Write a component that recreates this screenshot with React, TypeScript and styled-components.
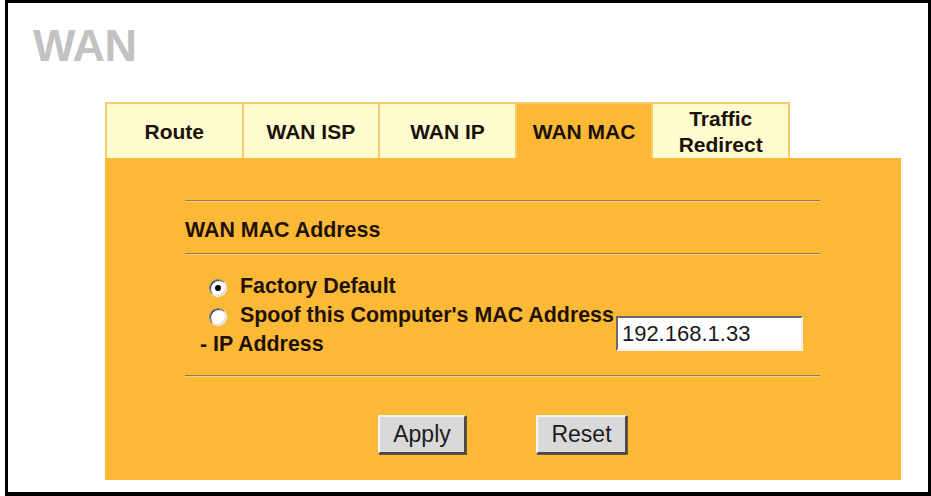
import React, { useState } from 'react';
import styled, { createGlobalStyle } from 'styled-components';

const GlobalStyle = createGlobalStyle`
    html, body {
        margin: 0;
        padding: 0;
        background: #ffffff;
    }
    body {
        font-family: "Liberation Sans", Arial, sans-serif;
    }
`
const Frame = styled.div`
    box-sizing: border-box;
    margin-left: 5px;
    width: 926px;
    height: 496px;
    border: 3px solid #000000;
    border-bottom-width: 4px;
    background: #ffffff;
    padding: 17px 0 0 97px;
`
const PageTitle = styled.div`
    margin-left: -72px;
    font-size: 45px;
    line-height: 52px;
    font-weight: 700;
    color: #c2c2c2;
    letter-spacing: -0.5px;
`
const TabRow = styled.div`
    display: flex;
    margin-top: 30px;
    width: 685px;
    height: 56px;
    box-sizing: border-box;
    border-top: 2px solid #f4cc6c;
    border-left: 2px solid #f4cc6c;
`
const Tab = styled.div<{ $active?: boolean }>`
    box-sizing: border-box;
    width: 137px;
    height: 100%;
    display: flex;
    align-items: center;
    justify-content: center;
    text-align: center;
    border-right: 2px solid #f4cc6c;
    background: ${({ $active }) => ($active ? '#fcb935' : '#fffcd0')};
    color: #1a1208;
    font-size: 21px;
    font-weight: 700;
    line-height: 26px;
    padding-top: 2px;
    cursor: pointer;
`
const Panel = styled.div`
    box-sizing: border-box;
    width: 796px;
    height: 322px;
    background: #fcb935;
    padding: 42px 81px 0 80px;
    color: #1e1208;
`
const Rule = styled.div`
    height: 0;
    border-top: 1px solid #8f7c5a;
    border-bottom: 1px solid #f1cf86;
`
const Heading = styled.div`
    font-size: 21.4px;
    font-weight: 700;
    line-height: 24px;
    margin: 16px 0 11px;
`
const Options = styled.div`
    padding: 17px 0 16px 15px;
`
const OptionLine = styled.label<{ $indent?: boolean }>`
    display: flex;
    align-items: center;
    height: 29px;
    font-size: 21.4px;
    font-weight: 700;
    white-space: nowrap;
    padding-left: ${({ $indent }) => ($indent ? '9px' : '0')};
    cursor: pointer;
`
const SpoofRow = styled.div`
    display: flex;
    align-items: center;
`
const LabelColumn = styled.div`
    display: flex;
    flex-direction: column;
`
const Radio = styled.span<{ $checked?: boolean }>`
    position: relative;
    box-sizing: border-box;
    width: 18px;
    height: 18px;
    margin-right: 13px;
    margin-top: 3px;
    border-radius: 50%;
    background: #ffffff;
    border: 1px solid;
    border-color: #7e7e7e #f2f2f2 #f2f2f2 #7e7e7e;
    box-shadow: inset 1px 1px 0 #3a3a3a, inset -1px -1px 0 #d8d4cc;
    flex: none;
    &::after {
        content: '';
        display: ${({ $checked }) => ($checked ? 'block' : 'none')};
        position: absolute;
        left: 50%;
        top: 50%;
        width: 6px;
        height: 6px;
        margin: -3px 0 0 -3px;
        border-radius: 50%;
        background: #000000;
    }
`
const AddressInput = styled.input`
    box-sizing: border-box;
    width: 187px;
    height: 35px;
    margin: 6px 0 0 2px;
    padding: 2px 4px 0;
    font-family: "Liberation Sans", Arial, sans-serif;
    font-size: 22px;
    color: #1a1a1a;
    background: #ffffff;
    border: 2px solid;
    border-color: #6a6a6a #f4f4f4 #f4f4f4 #6a6a6a;
    outline: none;
`
const ButtonRow = styled.div`
    display: flex;
    justify-content: center;
    gap: 70px;
    margin-top: 38px;
`
const ClassicButton = styled.button<{ $width: number }>`
    box-sizing: border-box;
    width: ${({ $width }) => $width}px;
    height: 39px;
    font-family: "Liberation Sans", Arial, sans-serif;
    font-size: 23px;
    color: #1c1c1c;
    background: #d9d9d9;
    border: 2px solid;
    border-color: #f4f4f4 #4a4a4a #4a4a4a #f4f4f4;
    box-shadow: 1px 1px 0 #6a5a3a;
    padding: 0;
    cursor: pointer;
`

const tabs = ['Route', 'WAN ISP', 'WAN IP', 'WAN MAC', 'Traffic\nRedirect'];

export default function App() {
    const [mode, setMode] = useState<'factory' | 'spoof'>('factory');
    const [ip, setIp] = useState('192.168.1.33');

    return (
        <>
            <GlobalStyle />
            <Frame>
                <PageTitle>WAN</PageTitle>
                <TabRow>
                    {tabs.map((t) => (
                        <Tab key={t} $active={t === 'WAN MAC'}>
                            <span style={{ whiteSpace: 'pre-line' }}>{t}</span>
                        </Tab>
                    ))}
                </TabRow>
                <Panel>
                    <Rule />
                    <Heading>WAN MAC Address</Heading>
                    <Rule />
                    <Options>
                        <OptionLine $indent onClick={() => setMode('factory')}>
                            <Radio $checked={mode === 'factory'} />
                            Factory Default
                        </OptionLine>
                        <SpoofRow>
                            <LabelColumn>
                                <OptionLine $indent onClick={() => setMode('spoof')}>
                                    <Radio $checked={mode === 'spoof'} />
                                    Spoof this Computer's MAC Address
                                </OptionLine>
                                <OptionLine>- IP Address</OptionLine>
                            </LabelColumn>
                            <AddressInput value={ip} onChange={(e) => setIp(e.target.value)} />
                        </SpoofRow>
                    </Options>
                    <Rule />
                    <ButtonRow>
                        <ClassicButton $width={88}>Apply</ClassicButton>
                        <ClassicButton $width={91} onClick={() => { setMode('factory'); setIp('192.168.1.33'); }}>Reset</ClassicButton>
                    </ButtonRow>
                </Panel>
            </Frame>
        </>
    );
}
